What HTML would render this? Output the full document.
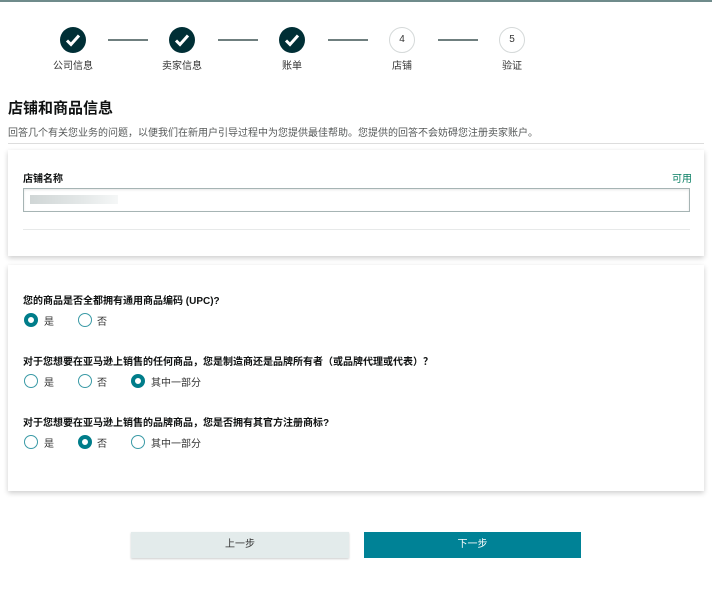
<!DOCTYPE html>
<html><head><meta charset="utf-8"><style>
*{margin:0;padding:0;box-sizing:border-box}
body{width:712px;height:589px;background:#fff;font-family:"Liberation Sans","Noto Sans CJK SC",sans-serif;position:relative;overflow:hidden;color:#0f1111}
.a{position:absolute}
.top{left:0;top:0;width:712px;height:2px;background:#6f8b8b}
.c{width:26px;height:26px;border-radius:50%;top:27px}
.done{background:#002f36}
.todo{border:1px solid #d5d9d9;background:#fff;font-size:10px;text-align:center;line-height:24px;color:#333}
.ln{top:39px;height:2px;width:40px;background:#6f7f7f}
.lb{top:57px;font-size:10px;width:80px;text-align:center;color:#333}
.card{background:#fff;box-shadow:0 2px 5px rgba(0,0,0,.2)}
.q{font-size:10px;font-weight:bold;left:23px}
.r{width:14px;height:14px;border-radius:50%;border:1px solid #3a9aa6}
.rs{border:4px solid #007d8a}
.rl{font-size:10px;color:#333}
.btn{height:26px;font-size:10px;text-align:center;line-height:26px;top:532px}
</style></head><body>
<div class="a top"></div>
<div class="a c done" style="left:60px"><svg width="26" height="26"><path d="M7 13.5l4 4 8-9" stroke="#fff" stroke-width="3" fill="none"/></svg></div>
<div class="a c done" style="left:169px"><svg width="26" height="26"><path d="M7 13.5l4 4 8-9" stroke="#fff" stroke-width="3" fill="none"/></svg></div>
<div class="a c done" style="left:279px"><svg width="26" height="26"><path d="M7 13.5l4 4 8-9" stroke="#fff" stroke-width="3" fill="none"/></svg></div>
<div class="a c todo" style="left:389px">4</div>
<div class="a c todo" style="left:499px">5</div>
<div class="a ln" style="left:108px"></div>
<div class="a ln" style="left:218px"></div>
<div class="a ln" style="left:328px"></div>
<div class="a ln" style="left:438px"></div>
<div class="a lb" style="left:33px">公司信息</div>
<div class="a lb" style="left:142px">卖家信息</div>
<div class="a lb" style="left:252px">账单</div>
<div class="a lb" style="left:362px">店铺</div>
<div class="a lb" style="left:472px">验证</div>
<div class="a" style="left:8px;top:97px;font-size:15px;font-weight:bold">店铺和商品信息</div>
<div class="a" style="left:8px;top:124px;font-size:10px;color:#565959">回答几个有关您业务的问题，以便我们在新用户引导过程中为您提供最佳帮助。您提供的回答不会妨碍您注册卖家账户。</div>
<div class="a" style="left:8px;top:143px;width:696px;height:1px;background:#ddd"></div>
<div class="a card" style="left:8px;top:150px;width:696px;height:106px"></div>
<div class="a q" style="top:170px">店铺名称</div>
<div class="a" style="left:672px;top:170px;font-size:10px;color:#067d62">可用</div>
<div class="a" style="left:23px;top:188px;width:667px;height:24px;border:1px solid #a6b4b4;box-shadow:inset 0 1px 2px rgba(0,0,0,.1)"></div>
<div class="a" style="left:30px;top:195px;width:88px;height:9px;background:linear-gradient(90deg,#d0d6d6,#e4e8e8 60%,#f5f7f7)"></div>
<div class="a" style="left:23px;top:229px;width:667px;height:1px;background:#e7e9e9"></div>
<div class="a card" style="left:8px;top:265px;width:696px;height:226px"></div>
<div class="a q" style="top:292px">您的商品是否全都拥有通用商品编码 (UPC)?</div>
<div class="a r rs" style="left:24px;top:313px"></div><div class="a rl" style="left:44px;top:313px">是</div>
<div class="a r" style="left:78px;top:313px"></div><div class="a rl" style="left:97px;top:313px">否</div>
<div class="a q" style="top:353px">对于您想要在亚马逊上销售的任何商品，您是制造商还是品牌所有者（或品牌代理或代表）？</div>
<div class="a r" style="left:24px;top:374px"></div><div class="a rl" style="left:44px;top:374px">是</div>
<div class="a r" style="left:78px;top:374px"></div><div class="a rl" style="left:97px;top:374px">否</div>
<div class="a r rs" style="left:131px;top:374px"></div><div class="a rl" style="left:151px;top:374px">其中一部分</div>
<div class="a q" style="top:414px">对于您想要在亚马逊上销售的品牌商品，您是否拥有其官方注册商标?</div>
<div class="a r" style="left:24px;top:435px"></div><div class="a rl" style="left:44px;top:435px">是</div>
<div class="a r rs" style="left:78px;top:435px"></div><div class="a rl" style="left:97px;top:435px">否</div>
<div class="a r" style="left:131px;top:435px"></div><div class="a rl" style="left:151px;top:435px">其中一部分</div>
<div class="a btn" style="left:131px;width:218px;background:#e3ebeb;color:#333;box-shadow:0 1px 2px rgba(0,0,0,.2)">上一步</div>
<div class="a btn" style="left:364px;width:217px;background:#008296;color:#fff">下一步</div>
</body></html>
